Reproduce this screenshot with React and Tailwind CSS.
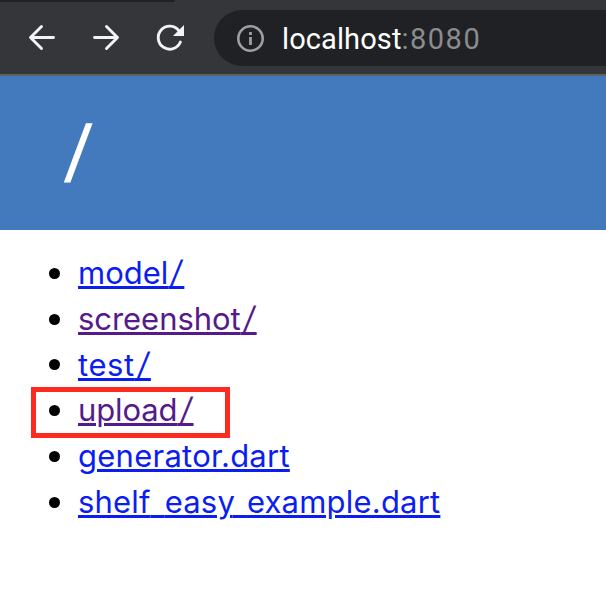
const entries = [
  { name: "model", dir: true, tone: "text-[#0b1df0] decoration-[#0b1df0]", spacing: "tracking-[0px]" },
  { name: "screenshot", dir: true, tone: "text-[#551a8b] decoration-[#551a8b]", spacing: "tracking-[-0.05px]" },
  { name: "test", dir: true, tone: "text-[#0b1df0] decoration-[#0b1df0]", spacing: "tracking-[0.6px]" },
  { name: "upload", dir: true, tone: "text-[#551a8b] decoration-[#551a8b]", spacing: "tracking-[-0.1px]", marked: true },
  { name: "generator.dart", tone: "text-[#0b1df0] decoration-[#0b1df0]", spacing: "tracking-[0.25px]" },
  { name: "shelf_easy_example.dart", tone: "text-[#0b1df0] decoration-[#0b1df0]", spacing: "tracking-[0.2px]" },
];

function Toolbar() {
  return (
    <header className="h-[76px] bg-[#35363a] border-b-2 border-[#5f6063] relative flex items-start pt-[10px]">
      <div className="absolute left-0 top-0 h-[2px] w-[175px] rounded-br-[4px] bg-[#202124]" />
      <svg className="w-[214px] h-14 shrink-0" viewBox="0 10 214 56" fill="none" stroke="#f1f3f4" strokeWidth="2.9" strokeLinecap="round" strokeLinejoin="round">
        <path d="M53.5 37.5H30.5M41.5 26.5L30.5 37.5L41.5 48.5" />
        <path d="M94.5 37.5H117.5M106.5 26.5L117.5 37.5L106.5 48.5" />
        <path d="M180.4 42A11.5 11.5 0 1 1 179 30.8" />
        <path d="M184 25V36H173Z" fill="#f1f3f4" stroke="none" />
      </svg>
      <div className="h-14 flex-1 rounded-l-full bg-[#202124] flex items-center pl-[22px]">
        <svg className="size-7 shrink-0" viewBox="0 0 28 28" fill="none">
          <circle cx="14.5" cy="14.5" r="12.2" stroke="#9aa0a6" strokeWidth="2.6" />
          <path d="M14.5 8V11M14.5 13V21" stroke="#9aa0a6" strokeWidth="2.8" />
        </svg>
        <div className="ml-[18px] mt-px font-['Roboto',sans-serif] text-[29px] leading-9 text-white tracking-[0.1px] whitespace-nowrap">
          <span className="font-[450]">localhost</span>
          <span className="text-[#8b8c8e] tracking-[1.5px]">:8080</span>
        </div>
      </div>
    </header>
  );
}

// Wide slash: the spaces carry the link's underline beneath the slanted stroke.
function Slash() {
  return (
    <span className="relative tracking-[-0.7px]">
      {"\u00a0\u00a0"}
      <span className="absolute left-[3px] -top-[1px] leading-none tracking-normal inline-block -skew-x-[8deg]">
        <span className="block leading-[38px]">/</span>
      </span>
    </span>
  );
}

function Label({ text }) {
  return text.split(/(_)/).map((part, i) =>
    part === "_" ? (
      <span key={i} className="[-webkit-text-fill-color:transparent] [text-decoration-skip-ink:none]">_</span>
    ) : (
      part
    )
  );
}

export default function App() {
  return (
    <div className="h-[594px] w-[606px] overflow-hidden bg-white font-['Inter',sans-serif]">
      <Toolbar />
      <div className="h-[154px] bg-[#437abe] pl-[66px] pt-[40px]">
        <h1 className="text-white leading-none">
          <span className="inline-block text-[68px] leading-[68px] font-medium -skew-x-[6deg]">/</span>
        </h1>
      </div>
      <ul className="pt-[20.5px]">
        {entries.map((e) => (
          <li key={e.name} className="relative h-[45.75px] flex items-center pl-[49px]">
            {e.marked && <div className="absolute left-[31px] top-[-1px] w-[199px] h-[51px] border-5 border-[#ff2a1f]" />}
            <span className="size-[11px] rounded-full bg-black shrink-0" />
            <a className={`ml-[18px] -mt-[1.5px] text-[31px] leading-[45px] whitespace-nowrap underline decoration-[3px] underline-offset-[2px] ${e.tone} ${e.spacing}`}>
              <Label text={e.name} />
              {e.dir && <Slash />}
            </a>
          </li>
        ))}
      </ul>
    </div>
  );
}
